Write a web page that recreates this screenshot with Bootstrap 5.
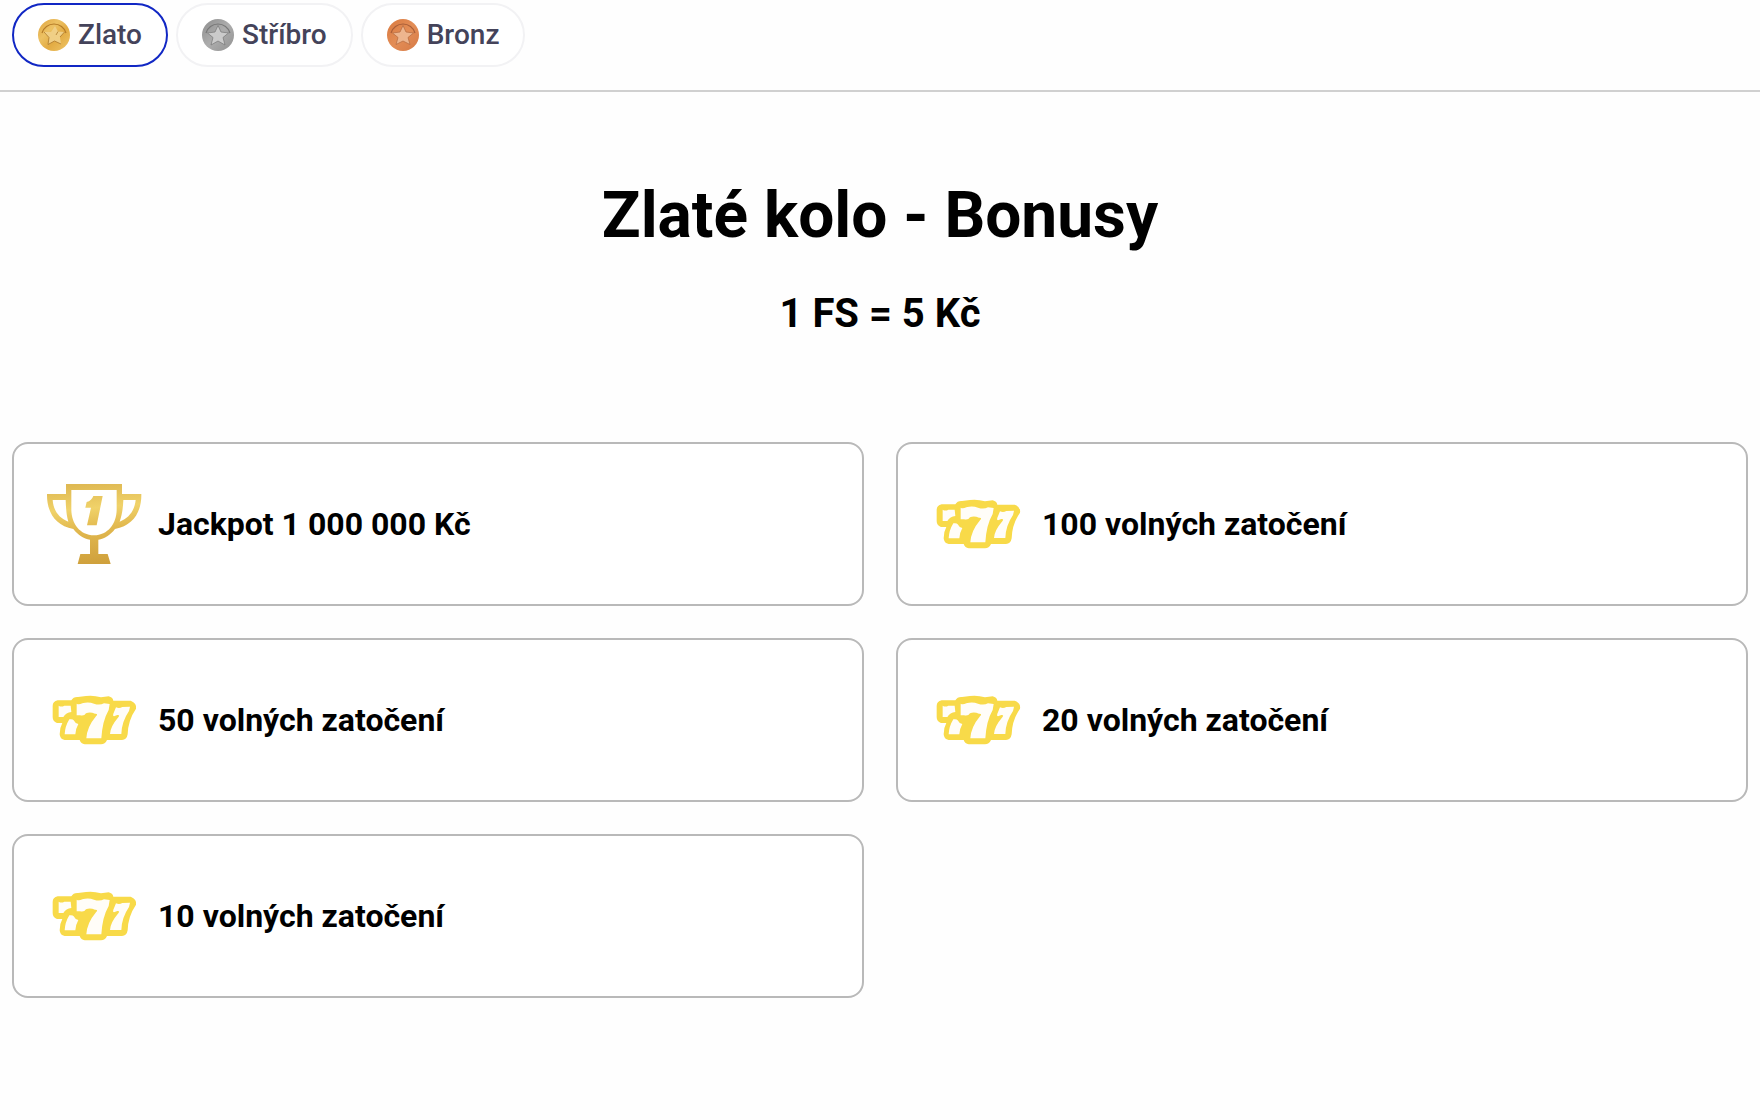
<!DOCTYPE html>
<html lang="cs">
<head>
<meta charset="utf-8">
<meta name="viewport" content="width=device-width, initial-scale=1">
<title>Zlaté kolo - Bonusy</title>
<link rel="stylesheet" href="https://cdn.jsdelivr.net/npm/bootstrap@5.3.0/dist/css/bootstrap.min.css">
<style>
  body { font-family: Roboto, "Noto Sans", sans-serif; color: #000; background: #fefefe; }
  .tab-bar { padding: 3px 12px 23px; border-bottom: 2px solid #d0d0d0; }
  .tab-pill { height: 64px; padding: 0 24px; border: 2px solid #f2f2f4; border-radius: 32px; background: #fff; color: #44435a; font-size: 28px; line-height: 40px; font-weight: 500; }
  .tab-pill.active { border-color: #1127c4; }
  .coin { width: 32px; height: 32px; }
  .wheel { padding: 86px 12px 32px; }
  .wheel-title { font-size: 64px; line-height: 76px; font-weight: 700; margin-bottom: 36px; }
  .wheel-rate { font-size: 40px; line-height: 48px; font-weight: 700; margin-bottom: 104px; }
  .bonus-grid { --bs-gutter-x: 32px; --bs-gutter-y: 32px; }
  .bonus { padding: 32px; border: 2px solid #b9b9b9; border-radius: 16px; background: #fff; }
  .bonus-icon { width: 96px; height: 96px; flex: none; }
  .bonus-name { font-size: 32px; line-height: 40px; font-weight: 700; }
</style>
</head>
<body>
<svg width="0" height="0" class="position-absolute" aria-hidden="true">
  <defs>
    <linearGradient id="gold" x1="0" y1="0" x2="1" y2="1">
      <stop offset="0" stop-color="#dfa23c"/><stop offset=".35" stop-color="#edc264"/><stop offset=".6" stop-color="#e2ab43"/><stop offset="1" stop-color="#f0c76a"/>
    </linearGradient>
    <linearGradient id="silver" x1="0" y1="0" x2="1" y2="1">
      <stop offset="0" stop-color="#8d8d8d"/><stop offset=".5" stop-color="#adadad"/><stop offset="1" stop-color="#929292"/>
    </linearGradient>
    <linearGradient id="bronze" x1="0" y1="0" x2="1" y2="1">
      <stop offset="0" stop-color="#d9793f"/><stop offset=".5" stop-color="#e38d56"/><stop offset="1" stop-color="#d67a45"/>
    </linearGradient>
    <linearGradient id="cup" gradientUnits="userSpaceOnUse" x1="270" y1="162" x2="290" y2="402">
      <stop offset="0" stop-color="#dfb953"/><stop offset=".3" stop-color="#f0d269"/><stop offset=".55" stop-color="#e2b94f"/><stop offset="1" stop-color="#cfa03c"/>
    </linearGradient>
    <symbol id="trophy" viewBox="138 138 288 288">
      <path fill="url(#cup)" fill-rule="evenodd" d="M198 162H366V192H424C425 244 401 287 345 297C331 315 314 326 295 329V372H323L332 402H233L241 372H270V329C251 326 234 315 220 297C164 287 140 244 141 192H198ZM214 180V240C215 282 240 315 282 316C324 315 349 282 350 240V180ZM158 210C160 240 176 264 205 275C199 255 198 235 197 210ZM370 210C369 235 366 255 359 275C388 264 404 240 407 210Z"/>
      <path fill="url(#cup)" d="M280 198H308L290 286H261L273 233H256L260 216C270 214 277 207 280 198Z"/>
    </symbol>
    <symbol id="sevens" viewBox="30 -27 288 288">
      <path fill="#f8da49" d="M50 75Q50 61 65 58H106Q112 47 126 48L150 45Q172 42 195 49L218 46Q230 49 232 59L284 59Q303 66 300 83Q276 118 275 160Q272 177 258 177H213Q207 190 195 190H146Q135 188 131 177H86Q72 175 71 160Q71 140 79 126H63Q50 122 50 108Z"/>
      <g fill="#fffdf8">
        <path d="M68 74Q76 79 85 74H104L106 93Q90 95 82 108H68Z"/>
        <path d="M100 115Q110 113 113 118Q117 127 127 129Q119 143 118 160H86Q87 136 100 115Z"/>
        <path d="M122 68Q128 72 139 67Q157 62 174 68T204 67L221 69L218 87Q199 120 196 172H151Q153 138 180 106Q188 97 177 98Q162 91 150 97Q145 106 132 103H122Z"/>
        <path d="M240 79Q250 83 259 78L282 77L279 90Q257 122 256 159H222Q223 137 247 109Q253 101 244 102L234 106Q229 104 232 98Z"/>
      </g>
    </symbol>
  </defs>
</svg>

<nav class="tab-bar d-flex gap-2" aria-label="Kola">
  <button type="button" class="tab-pill active d-flex align-items-center gap-2" aria-pressed="true">
    <svg class="coin" viewBox="0 0 32 32" aria-hidden="true">
      <circle cx="16" cy="16" r="16" fill="url(#gold)"/>
      <path d="M4 14A12.500 12.500 0 0 1 28 14" fill="none" stroke="#b47b27" stroke-width="1.200"/>
      <path d="M17 7L20 12.500L26.500 13L22 18L23 25L16.500 22L10 25.500L11 18.500L5.500 13L13 13Z" fill="#f0cf86"/>
      <path d="M6 13L11 18.500L10 25.500L16.500 22L23 25M20 12.500L18 16M22 18L26.500 13" fill="none" stroke="#ac792b" stroke-width=".8"/>
    </svg>
    <span>Zlato</span>
  </button>
  <button type="button" class="tab-pill d-flex align-items-center gap-2" aria-pressed="false">
    <svg class="coin" viewBox="0 0 32 32" aria-hidden="true">
      <circle cx="16" cy="16" r="16" fill="url(#silver)"/>
      <path d="M4 14A12.500 12.500 0 0 1 28 14" fill="none" stroke="#777" stroke-width="1.200"/>
      <path d="M16 6.500L19 13L26.500 14L21 18.500L23 26L16 22L9 26L11 18.500L5.500 14L13 13Z" fill="#cbcbcb" stroke="#777" stroke-width=".7"/>
    </svg>
    <span>Stříbro</span>
  </button>
  <button type="button" class="tab-pill d-flex align-items-center gap-2" aria-pressed="false">
    <svg class="coin" viewBox="0 0 32 32" aria-hidden="true">
      <circle cx="16" cy="16" r="16" fill="url(#bronze)"/>
      <path d="M4 14A12.500 12.500 0 0 1 28 14" fill="none" stroke="#a95e38" stroke-width="1.200"/>
      <path d="M16 6.500L19 13L26.500 14L21 18.500L23 25.500L16 22L9 25.500L11 18.500L5.500 14L13 13Z" fill="#edb58e" stroke="#b3683e" stroke-width=".7"/>
    </svg>
    <span>Bronz</span>
  </button>
</nav>

<main class="wheel container-fluid">
  <h1 class="wheel-title text-center">Zlaté kolo - Bonusy</h1>
  <h2 class="wheel-rate text-center">1 FS = 5 Kč</h2>
  <div class="bonus-grid row row-cols-2">
    <div class="col"><div class="bonus d-flex align-items-center gap-3">
      <svg class="bonus-icon" aria-hidden="true"><use href="#trophy"/></svg><span class="bonus-name">Jackpot 1 000 000 Kč</span>
    </div></div>
    <div class="col"><div class="bonus d-flex align-items-center gap-3">
      <svg class="bonus-icon" aria-hidden="true"><use href="#sevens"/></svg><span class="bonus-name">100 volných zatočení</span>
    </div></div>
    <div class="col"><div class="bonus d-flex align-items-center gap-3">
      <svg class="bonus-icon" aria-hidden="true"><use href="#sevens"/></svg><span class="bonus-name">50 volných zatočení</span>
    </div></div>
    <div class="col"><div class="bonus d-flex align-items-center gap-3">
      <svg class="bonus-icon" aria-hidden="true"><use href="#sevens"/></svg><span class="bonus-name">20 volných zatočení</span>
    </div></div>
    <div class="col"><div class="bonus d-flex align-items-center gap-3">
      <svg class="bonus-icon" aria-hidden="true"><use href="#sevens"/></svg><span class="bonus-name">10 volných zatočení</span>
    </div></div>
  </div>
</main>
<script src="https://cdn.jsdelivr.net/npm/bootstrap@5.3.0/dist/js/bootstrap.bundle.min.js"></script>
</body>
</html>
